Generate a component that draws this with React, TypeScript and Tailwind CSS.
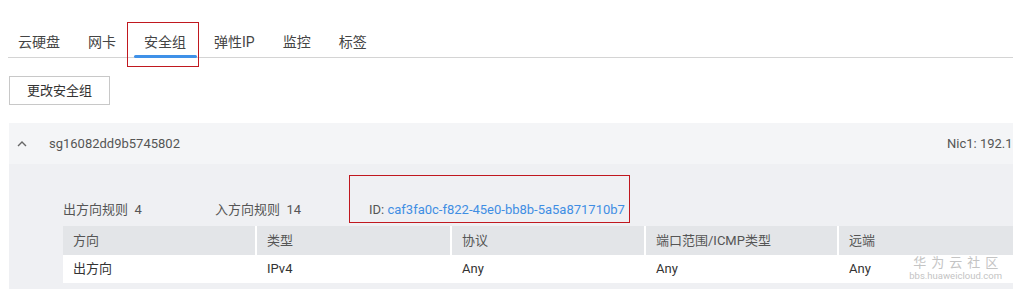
import React from "react";

const font = { fontFamily: '"Roboto", "Noto Sans CJK SC", sans-serif' };

export default function App() {
  const tabs = ["云硬盘", "网卡", "安全组", "弹性IP", "监控", "标签"];
  const cols = [
    { h: "方向", v: "出方向", w: "w-[194px]" },
    { h: "类型", v: "IPv4", w: "w-[195px]" },
    { h: "协议", v: "Any", w: "w-[194px]" },
    { h: "端口范围/ICMP类型", v: "Any", w: "w-[193px]" },
    { h: "远端", v: "Any", w: "flex-1" },
  ];
  return (
    <div className="w-[1013px] h-[289px] bg-white overflow-hidden text-[#333]" style={font}>
      {/* tabs */}
      <div className="pt-[22px] pl-[8px]">
        <div className="flex h-[36px] border-b border-[#d4d4d4] text-[14px] pl-[10px] gap-[28px]">
          {tabs.map((t, i) => (
            <div
              key={t}
              className={"relative flex items-end pb-[4px] text-[#444]"}
            >
              {t}
              {i === 2 && (
                <>
                  <div className="absolute left-[-10px] right-[-11px] bottom-[-1px] h-[3px] bg-[#3f91e8] rounded-sm" />
                  <div className="absolute left-[-17px] right-[-13px] top-0 h-[45px] border border-[#c0181f]" />
                </>
              )}
            </div>
          ))}
        </div>
      </div>
      {/* button */}
      <div className="pl-[9px] pt-[18px]">
        <button className="h-[29px] w-[101px] border border-[#c8c8c8] bg-white text-[13px] text-[#333]">
          更改安全组
        </button>
      </div>
      {/* panel */}
      <div className="ml-[9px] mt-[18px]">
        <div className="h-[41px] bg-[#f4f5f7] flex items-center text-[13px] text-[#555]">
          <svg width="10" height="10" viewBox="0 0 10 10" className="ml-[8px] mr-[22px]">
            <path d="M1 7 L5 3 L9 7" fill="none" stroke="#666" strokeWidth="1.4" />
          </svg>
          <span className="flex-1">sg16082dd9b5745802</span>
          <span className="whitespace-nowrap w-[66px] overflow-hidden text-[#555]">Nic1: 192.1</span>
        </div>
        <div className="bg-[#eff0f3] pl-[54px] pt-[33px] h-[125px]">
          <div className="flex items-end text-[13px] text-[#555] h-[26px] pb-[4px]">
            <span className="w-[152px]">出方向规则&nbsp;&nbsp;4</span>
            <span className="w-[154px]">入方向规则&nbsp;&nbsp;14</span>
            <span className="relative">
              ID: <span className="text-[#3f8ee3]">caf3fa0c-f822-45e0-bb8b-5a5a871710b7</span>
              <div className="absolute left-[-20px] top-[-25px] w-[281px] h-[48px] border border-[#c0181f]" />
            </span>
          </div>
          <div className="mt-[3px]">
            <div className="flex bg-[#e3e5e8] h-[29px] text-[13px] text-[#555]">
              {cols.map((c, i) => (
                <div
                  key={c.h}
                  className={c.w + " flex items-center pl-[10px] " + (i < 4 ? "border-r-[2px] border-white" : "")}
                >
                  {c.h}
                </div>
              ))}
            </div>
            <div className="relative flex bg-white h-[28px] text-[13px] text-[#333]">
              {cols.map((c, i) => (
                <div key={c.h} className={c.w + " flex items-center pl-[10px] " + (i < 4 ? "border-r-[2px] border-transparent" : "")}>
                  {c.v}
                </div>
              ))}
              <div className="absolute right-[11px] top-[1px] flex flex-col items-center leading-none text-[#c4c4c4]">
                <span className="text-[13px] tracking-[5px] mr-[-5px]">华为云社区</span>
                <span className="text-[9.5px] mt-[2px]">bbs.huaweicloud.com</span>
              </div>
            </div>
          </div>
        </div>
      </div>
    </div>
  );
}
